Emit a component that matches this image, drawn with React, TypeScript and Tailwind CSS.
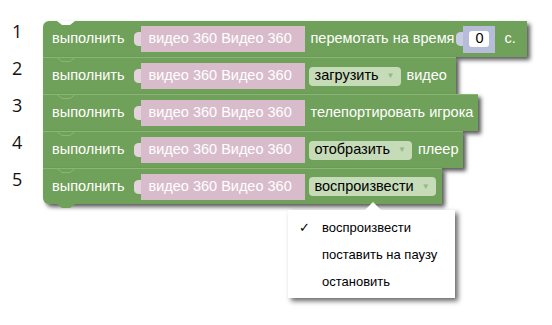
import React from "react";

const Nub = ({ color }: { color: string }) => (
  <svg width="7" height="14" viewBox="0 0 7 14" className="block">
    <path d="M7 0 L7 14 L5 14 C2 14 0 12 0 10 L0 4 C0 2 2 0 5 0 Z" fill={color} />
  </svg>
);

const Video = () => (
  <div className="flex items-center ml-[9px]">
    <Nub color="#e4d3dd" />
    <div className="h-[26px] w-[164px] bg-[#d9bccb] flex items-center pl-[8px] text-white whitespace-nowrap">
      видео 360 Видео 360
    </div>
  </div>
);

const Drop = ({ label }: { label: string }) => (
  <div className="ml-[4px] h-[19px] rounded-[4px] bg-[#c6dbb8] flex items-center pl-[6px] pr-[6px] text-black whitespace-nowrap">
    {label}
    <span className="ml-[8px] text-[8px] text-[#93b983]">▼</span>
  </div>
);

const Block = ({
  w,
  h,
  first,
  last,
  children,
}: {
  w: string;
  h: string;
  first?: boolean;
  last?: boolean;
  children: React.ReactNode;
}) => (
  <div
    className={`relative ${w} ${h} bg-[#70a15a] flex items-center pl-[9px] text-white shadow-[3px_3px_4px_rgba(0,0,0,0.65)] ${
      first ? "rounded-tl-[6px]" : "border-t border-[#89b576]"
    } ${last ? "rounded-bl-[6px]" : ""}`}
  >
    {first ? (
      <svg width="18" height="5" viewBox="0 0 18 5" className="absolute left-[14px] top-0">
        <path d="M0 0 L5 4 L13 4 L18 0 Z" fill="#ffffff" />
      </svg>
    ) : (
      <svg width="18" height="6" viewBox="0 0 18 6" className="absolute left-[14px] -top-px">
        <path d="M0 0.5 L5 4.5 L13 4.5 L18 0.5" fill="none" stroke="#89b576" strokeWidth="1" />
      </svg>
    )}
    {last && (
      <svg width="18" height="5" viewBox="0 0 18 5" className="absolute left-[14px] -bottom-[5px]">
        <path d="M0 0 L18 0 L13 4 L5 4 Z" fill="#70a15a" />
      </svg>
    )}
    {children}
  </div>
);

export default function App() {
  return (
    <div
      className="relative w-[552px] h-[325px] bg-white overflow-hidden text-[14.5px]"
      style={{ fontFamily: '"Liberation Sans", Arial, sans-serif' }}
    >
      <div className="flex pt-[21px]">
        <div
          className="w-[43px] -mt-[8px] flex flex-col text-[18px] text-[#111]"
          style={{ fontFamily: '"Open Sans", sans-serif' }}
        >
          {["1", "2", "3", "4", "5"].map((n) => (
            <div key={n} className="h-[37px] leading-[37px] pl-[12px]">
              {n}
            </div>
          ))}
        </div>
        <div className="flex flex-col">
          <Block w="w-[484px]" h="h-[36px]" first>
            <span>выполнить</span>
            <Video />
            <span className="ml-[6px] whitespace-nowrap">перемотать на время</span>
            <div className="flex items-center ml-[2px]">
              <Nub color="#c7cbe3" />
              <div className="w-[32px] h-[27px] bg-[#b7bcd9] flex items-center justify-center">
                <div className="w-[20px] h-[16px] bg-white rounded-[3px] text-black flex items-center justify-center">
                  0
                </div>
              </div>
            </div>
            <span className="ml-[9px]">с.</span>
          </Block>
          <Block w="w-[413px]" h="h-[37px]">
            <span>выполнить</span>
            <Video />
            <Drop label="загрузить" />
            <span className="ml-[6px]">видео</span>
          </Block>
          <Block w="w-[435px]" h="h-[37px]">
            <span>выполнить</span>
            <Video />
            <span className="ml-[6px] whitespace-nowrap">телепортировать игрока</span>
          </Block>
          <Block w="w-[420px]" h="h-[37px]">
            <span>выполнить</span>
            <Video />
            <Drop label="отобразить" />
            <span className="ml-[6px]">плеер</span>
          </Block>
          <Block w="w-[399px]" h="h-[36px]" last>
            <span>выполнить</span>
            <Video />
            <Drop label="воспроизвести" />
          </Block>
        </div>
      </div>

      <div className="absolute left-[288px] top-[210px] w-[167px] h-[88px] bg-white shadow-[3px_3px_5px_rgba(0,0,0,0.6)] pt-[4px] text-[13px] text-black">
        <svg width="16" height="8" viewBox="0 0 16 8" className="absolute left-[77px] -top-[8px]">
          <path d="M0 8 L8 0 L16 8 Z" fill="#ffffff" />
        </svg>
        {[
          { t: "воспроизвести", c: true },
          { t: "поставить на паузу", c: false },
          { t: "остановить", c: false },
        ].map((it) => (
          <div key={it.t} className="h-[27px] flex items-center">
            <span className="w-[34px] pl-[11px] text-[13px]">{it.c ? "✓" : ""}</span>
            <span>{it.t}</span>
          </div>
        ))}
      </div>
    </div>
  );
}
